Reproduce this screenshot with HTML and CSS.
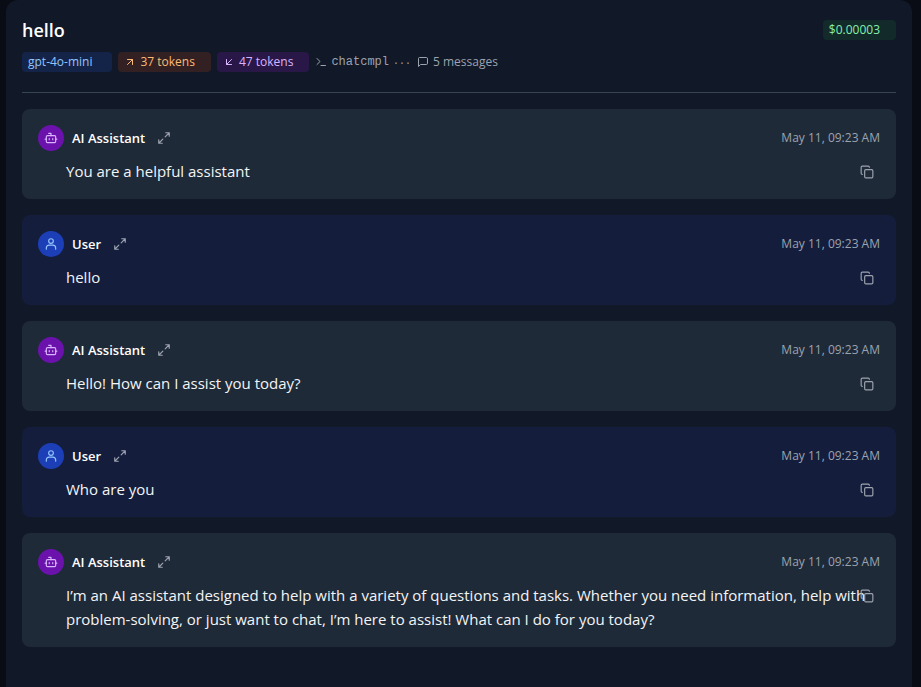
FILE: index.html
```html
<!DOCTYPE html>
<html lang="en">
<head>
    <meta charset="UTF-8">
    <title>hello</title>
    <link rel="stylesheet" href="styles.css">
</head>
<body>
    <!-- icons -->
    <svg class="sprite" aria-hidden="true">
        <symbol id="bot" viewBox="0 0 24 24"><path d="M12 8V4H8"/><rect x="4" y="8" width="16" height="12" rx="2"/><path d="M2 14h2M20 14h2M15 13v2M9 13v2"/></symbol>
        <symbol id="user" viewBox="0 0 24 24"><path d="M20 21v-2a5 5 0 0 0-5-5H9a5 5 0 0 0-5 5v2"/><circle cx="12" cy="7" r="4"/></symbol>
        <symbol id="expand" viewBox="0 0 24 24"><path d="M15 3h6v6M21 3l-7 7M3 21l7-7M9 21H3v-6"/></symbol>
        <symbol id="copy" viewBox="0 0 24 24"><rect x="8" y="8" width="14" height="14" rx="2"/><path d="M4 16c-1.100 0-2-.9-2-2V4c0-1.100.9-2 2-2h10c1.100 0 2 .9 2 2"/></symbol>
        <symbol id="up" viewBox="0 0 24 24"><path d="M7 7h10v10M7 17L17 7"/></symbol>
        <symbol id="down" viewBox="0 0 24 24"><path d="M17 7L7 17M17 17H7V7"/></symbol>
        <symbol id="terminal" viewBox="0 0 24 24"><path d="M4 17l6-6-6-6M12 19h9"/></symbol>
        <symbol id="message" viewBox="0 0 24 24"><path d="M21 15a2 2 0 0 1-2 2H7l-4 4V5a2 2 0 0 1 2-2h14a2 2 0 0 1 2 2z"/></symbol>
    </svg>
    <main class="panel">
        <header class="header">
            <div class="title-row">
                <h1>hello</h1>
                <span class="badge green">$0.00003</span>
            </div>
            <div class="meta">
                <span class="badge blue">gpt-4o-mini</span>
                <span class="badge orange"><svg class="icon"><use href="#up"/></svg>37 tokens</span>
                <span class="badge purple"><svg class="icon"><use href="#down"/></svg>47 tokens</span>
                <span class="info"><svg class="icon"><use href="#terminal"/></svg><span class="mono">chatcmpl</span><span class="dots">...</span></span>
                <span class="info"><svg class="icon"><use href="#message"/></svg>5 messages</span>
            </div>
        </header>
        <section class="messages">
            <article class="message">
                <div class="message-head">
                    <span class="avatar"><svg class="icon"><use href="#bot"/></svg></span>
                    <h2>AI Assistant</h2>
                    <button class="expand" aria-label="Expand"><svg class="icon"><use href="#expand"/></svg></button>
                    <time>May 11, 09:23 AM</time>
                </div>
                <div class="content">
                    <p>You are a helpful assistant</p>
                    <button class="copy" aria-label="Copy"><svg class="icon"><use href="#copy"/></svg></button>
                </div>
            </article>
            <article class="message user">
                <div class="message-head">
                    <span class="avatar"><svg class="icon"><use href="#user"/></svg></span>
                    <h2>User</h2>
                    <button class="expand" aria-label="Expand"><svg class="icon"><use href="#expand"/></svg></button>
                    <time>May 11, 09:23 AM</time>
                </div>
                <div class="content">
                    <p>hello</p>
                    <button class="copy" aria-label="Copy"><svg class="icon"><use href="#copy"/></svg></button>
                </div>
            </article>
            <article class="message">
                <div class="message-head">
                    <span class="avatar"><svg class="icon"><use href="#bot"/></svg></span>
                    <h2>AI Assistant</h2>
                    <button class="expand" aria-label="Expand"><svg class="icon"><use href="#expand"/></svg></button>
                    <time>May 11, 09:23 AM</time>
                </div>
                <div class="content">
                    <p>Hello! How can I assist you today?</p>
                    <button class="copy" aria-label="Copy"><svg class="icon"><use href="#copy"/></svg></button>
                </div>
            </article>
            <article class="message user">
                <div class="message-head">
                    <span class="avatar"><svg class="icon"><use href="#user"/></svg></span>
                    <h2>User</h2>
                    <button class="expand" aria-label="Expand"><svg class="icon"><use href="#expand"/></svg></button>
                    <time>May 11, 09:23 AM</time>
                </div>
                <div class="content">
                    <p>Who are you</p>
                    <button class="copy" aria-label="Copy"><svg class="icon"><use href="#copy"/></svg></button>
                </div>
            </article>
            <article class="message">
                <div class="message-head">
                    <span class="avatar"><svg class="icon"><use href="#bot"/></svg></span>
                    <h2>AI Assistant</h2>
                    <button class="expand" aria-label="Expand"><svg class="icon"><use href="#expand"/></svg></button>
                    <time>May 11, 09:23 AM</time>
                </div>
                <div class="content">
                    <p>I’m an AI assistant designed to help with a variety of questions and tasks. Whether you need information, help with problem-solving, or just want to chat, I’m here to assist! What can I do for you today?</p>
                    <button class="copy" aria-label="Copy"><svg class="icon"><use href="#copy"/></svg></button>
                </div>
            </article>
        </section>
    </main>
</body>
</html>
```
FILE: styles.css
```css
*{
    margin: 0;
    padding: 0;
    box-sizing: border-box;
}
body{
    min-height: 100vh;
    padding: 0 9px 0 6px;
    display: flex;
    background: #090c14;
    color: #ffffff;
    font-family: "Segoe UI", "Open Sans", "Noto Sans", sans-serif;
    font-size: 12px;
    line-height: 20px;
}
button{
    border: 0;
    background: none;
    color: #9ca3af;
    cursor: pointer;
}
.sprite{
    position: absolute;
    width: 0;
    height: 0;
}
.icon{
    display: block;
    flex: none;
    width: 12px;
    height: 12px;
    fill: none;
    stroke: currentColor;
    stroke-width: 2;
    stroke-linecap: round;
    stroke-linejoin: round;
}
.panel{
    flex: 1;
    min-width: 0;
    padding: 16px;
    border-radius: 12px 12px 0 0;
    background: #111827;
}
.header{
    padding-bottom: 20px;
    border-bottom: 1px solid #364554;
}
.title-row{
    display: flex;
    justify-content: space-between;
    align-items: center;
    height: 28px;
    margin-bottom: 8px;
}
h1{
    font-size: 18px;
    font-weight: 600;
    line-height: 28px;
}
.meta{
    display: flex;
    align-items: center;
    gap: 6px;
}
.badge{
    display: flex;
    align-items: center;
    gap: 4px;
    height: 20px;
    padding: 0 16px 0 6px;
    border-radius: 4px;
}
.green{
    background: #122b2a;
    color: #86efac;
}
.blue{
    padding-right: 20px;
    background: #142448;
    color: #93c5fd;
}
.orange{
    background: #332022;
    color: #fdba74;
}
.purple{
    background: #281747;
    color: #d8b4fe;
}
.info{
    display: flex;
    align-items: center;
    gap: 4px;
    color: #9ca3af;
}
.mono,.dots{
    font-family: "Liberation Mono", monospace;
}
.dots{
    font-size: 10px;
}
.messages{
    display: flex;
    flex-direction: column;
    gap: 16px;
    padding-top: 16px;
}
.message{
    padding: 16px;
    border-radius: 8px;
    background: #1f2a38;
}
.user{
    background: #141e3c;
}
.message-head{
    display: flex;
    align-items: center;
    height: 26px;
    margin-bottom: 8px;
}
.avatar{
    display: flex;
    justify-content: center;
    align-items: center;
    width: 26px;
    height: 26px;
    margin-right: 8px;
    border-radius: 50%;
    background: #6b12ac;
    color: #d8b4fe;
}
.user .avatar{
    background: #1c3fb8;
    color: #93c5fd;
}
.avatar .icon{
    width: 14px;
    height: 14px;
}
h2{
    font-size: 13px;
    font-weight: 600;
}
.expand{
    margin-left: 12px;
}
.expand .icon{
    width: 14px;
    height: 14px;
}
time{
    margin-left: auto;
    color: #9ca3af;
}
.content{
    position: relative;
    padding-left: 28px;
    color: #f3f4f6;
    font-size: 15px;
    line-height: 24px;
}
.copy{
    position: absolute;
    top: 6px;
    right: 6px;
}
.copy .icon{
    width: 14px;
    height: 14px;
}
```
